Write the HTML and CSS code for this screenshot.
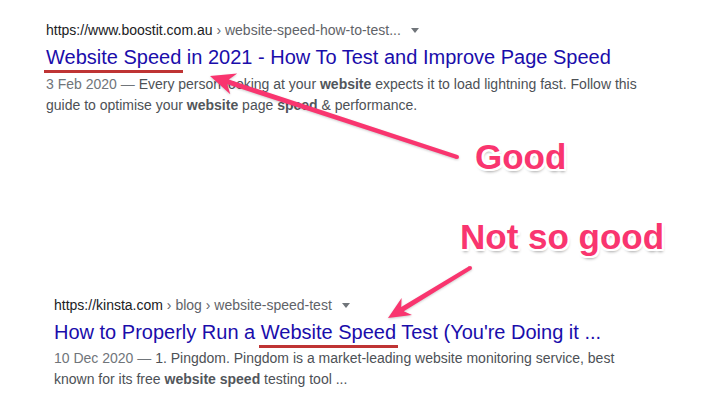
FILE: index.html
```html
<!DOCTYPE html>
<html lang="en">
<head>
  <meta charset="UTF-8">
  <title>Website Speed - search results</title>
  <link rel="stylesheet" href="styles.css">
</head>
<body>
  <div class="page">
    <div class="result first">
      <div class="cite">https://www.boostit.com.au<span class="path"> › website-speed-how-to-test...</span><span class="drop"></span></div>
      <div class="title"><span class="mark">Website Speed</span> in 2021 - How To Test and Improve Page Speed</div>
      <div class="snippet">
        <div class="line"><span class="date">3 Feb 2020 — </span>Every person looking at your <b>website</b> expects it to load lightning fast. Follow this</div>
        <div class="line">guide to optimise your <b>website</b> page <b>speed</b> &amp; performance.</div>
      </div>
    </div>

    <div class="result second">
      <div class="cite">https://kinsta.com<span class="path"> › blog › website-speed-test</span><span class="drop"></span></div>
      <div class="title">How to Properly Run a <span class="mark">Website Speed</span> Test (You're Doing it ...</div>
      <div class="snippet">
        <div class="line"><span class="date">10 Dec 2020 — </span>1. Pingdom. Pingdom is a market-leading website monitoring service, best</div>
        <div class="line">known for its free <b>website speed</b> testing tool ...</div>
      </div>
    </div>

    <!-- annotations drawn on top -->
    <svg class="arrows" width="714" height="418" viewBox="0 0 714 418">
      <g fill="#f9356f">
        <polygon points="210,76 237.2,73.4 228.8,79.6 457.6,155.1 456.4,158.9 227.3,84.3 230.3,94.3"/>
        <circle cx="457" cy="157" r="2"/>
        <polygon points="388,318 401.6,298 401.2,307 469,266.3 471,269.7 403.8,311.3 412,315.1"/>
        <circle cx="470" cy="268" r="2"/>
      </g>
    </svg>
    <div class="label good">Good</div>
    <div class="label notgood">Not so good</div>
  </div>
</body>
</html>
```

FILE: styles.css
```css
body {
  margin: 0;
  background: #fff;
  font-family: "Liberation Sans", Arial, sans-serif;
}

.page {
  position: relative;
  width: 714px;
  height: 418px;
  overflow: hidden;
}

.result.first {
  padding: 20px 0 0 46px;
}

.result.second {
  padding: 179px 0 0 54px;
}

.cite {
  font-size: 14px;
  line-height: 20px;
  color: #202124;
  display: flex;
  align-items: center;
  white-space: pre;
}

.cite .path {
  color: #5f6368;
}

.drop {
  width: 0;
  height: 0;
  margin-left: 10px;
  margin-top: 1px;
  border-top: 5px solid #70757a;
  border-left: 4px solid transparent;
  border-right: 4px solid transparent;
}

.title {
  margin-top: 4px;
  font-size: 20px;
  line-height: 26px;
  color: #1a0dab;
  white-space: nowrap;
}

.mark {
  position: relative;
}

.mark::after {
  content: "";
  position: absolute;
  left: -2px;
  right: -2px;
  bottom: -5px;
  height: 3px;
  background: #bf3434;
}

.snippet {
  margin-top: 4px;
  font-size: 14px;
  line-height: 21px;
  color: #4d5156;
}

.second .snippet {
  margin-top: 3px;
}

.line {
  white-space: nowrap;
}

.snippet .date {
  color: #70757a;
}

.snippet b {
  color: #52565b;
}

.arrows {
  position: absolute;
  left: 0;
  top: 0;
  filter: drop-shadow(0 1px 1px rgba(0,0,0,0.2));
}

.label {
  position: absolute;
  font-size: 35px;
  font-weight: bold;
  color: #f9356f;
  line-height: 40px;
  text-shadow:
    2px 0 0 #fff, -2px 0 0 #fff, 0 2px 0 #fff, 0 -2px 0 #fff,
    2px 2px 0 #fff, -2px -2px 0 #fff, 2px -2px 0 #fff, -2px 2px 0 #fff,
    1px 3px 3px rgba(0,0,0,0.35);
}

.good {
  left: 475px;
  top: 137px;
}

.notgood {
  left: 460px;
  top: 217px;
}
```
